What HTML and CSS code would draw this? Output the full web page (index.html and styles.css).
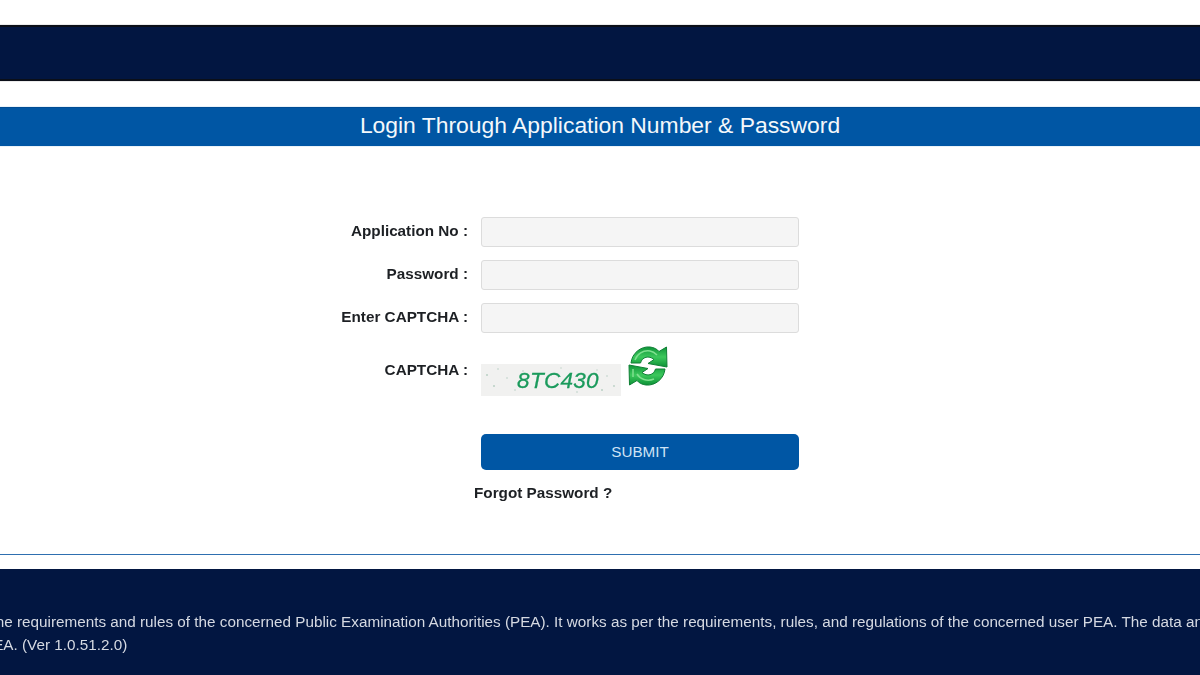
FILE: index.html
```html
<!DOCTYPE html>
<html lang="en">
<head>
<meta charset="utf-8">
<title>Login</title>
<link rel="stylesheet" href="styles.css">
</head>
<body>
<header class="topbar"></header>
<h1 class="title">Login Through Application Number &amp; Password</h1>
<main class="form">
  <div class="row">
    <label class="label">Application No :</label>
    <input class="field" type="text">
  </div>
  <div class="row">
    <label class="label">Password :</label>
    <input class="field" type="password">
  </div>
  <div class="row">
    <label class="label">Enter CAPTCHA :</label>
    <input class="field" type="text">
  </div>
  <div class="row captcha-row">
    <label class="label captcha-label">CAPTCHA :</label>
    <div class="captcha-wrap">
      <div class="captcha">
        <svg class="noise" width="140" height="32" viewBox="0 0 140 32" aria-hidden="true">
          <g fill="#b9cfc4">
            <circle cx="6" cy="11" r="1"/><circle cx="17" cy="5" r=".8"/><circle cx="13" cy="22" r="1"/><circle cx="26" cy="14" r=".8"/>
            <circle cx="34" cy="26" r=".8"/><circle cx="42" cy="7" r=".8"/><circle cx="80" cy="4" r=".7"/><circle cx="96" cy="28" r=".8"/>
            <circle cx="121" cy="26" r="1"/><circle cx="126" cy="12" r=".8"/><circle cx="133" cy="22" r=".9"/><circle cx="116" cy="6" r=".7"/>
          </g>
        </svg>
        <span class="captcha-text">8TC430</span>
      </div>
      <svg class="refresh" width="40" height="40" viewBox="0 0 40 40" aria-hidden="true">
        <defs>
          <linearGradient id="g1" x1="0" y1="0" x2="0" y2="1">
            <stop offset="0" stop-color="#0e9438"/>
            <stop offset=".5" stop-color="#3cc85c"/>
            <stop offset="1" stop-color="#0c9236"/>
          </linearGradient>
        </defs>
        <path d="M3 17 C4 7 13 0 22 1 C26 1.500 29 3 31 5.500 L38.500 1 L39 21 L20 17.500 L26 13.500 C21 9 14 11 12.500 17 Z" fill="url(#g1)" stroke="#0f7f35" stroke-width="1"/>
        <path d="M37 23 C36 33 27 40 18 39 C14 38.500 11 37 9 34.500 L1.500 39 L1 19 L20 22.500 L14 26.500 C19 31 26 29 27.500 23 Z" fill="url(#g1)" stroke="#0f7f35" stroke-width="1"/>
        <path d="M7 14 C9 8 15 4 22 5 C25 5.500 27 7 29 9" fill="none" stroke="#7fe08f" stroke-width="1.500"/>
        <path d="M5 23 L5 31 M9 28 C12 33 19 36 26 33" fill="none" stroke="#7fe08f" stroke-width="1.500"/>
      </svg>
    </div>
  </div>
  <div class="row submit-row">
    <span></span>
    <button class="submit" type="button">SUBMIT</button>
  </div>
  <a class="forgot">Forgot Password ?</a>
</main>
<hr class="rule">
<footer class="footer">
  <p class="footer-text">the requirements and rules of the concerned Public Examination Authorities (PEA). It works as per the requirements, rules, and regulations of the concerned user PEA. The data and<br>PEA. (Ver 1.0.51.2.0)</p>
</footer>
</body>
</html>
```
FILE: styles.css
```css
* { box-sizing: border-box; }
html, body { height: 675px; overflow: hidden; }
body {
  margin: 0;
  padding-top: 25px;
  background: #fff;
  font-family: "Liberation Sans", Arial, sans-serif;
  color: #212529;
  display: flex;
  flex-direction: column;
}
.topbar {
  height: 56px;
  flex: none;
  background: #021641;
  border-top: 2px solid #0b0f18;
  border-bottom: 2px solid #0b0f18;
  box-shadow: 0 0 1px #888;
}
.title {
  margin: 26px 0 0;
  height: 39px;
  flex: none;
  background: #0056a4;
  border-top: 1px solid #004c94;
  box-shadow: 0 0 1px #7fb0dc;
  color: #f4f8fb;
  font-size: 22.88px;
  font-weight: 400;
  line-height: 35px;
  text-align: center;
}
.form {
  flex: none;
  height: 408px;
  padding-top: 71px;
  display: flex;
  flex-direction: column;
}
.row {
  display: grid;
  grid-template-columns: 468px 318px;
  column-gap: 13px;
  margin-bottom: 13px;
  height: 30px;
}
.label {
  text-align: right;
  font-size: 15.28px;
  font-weight: 700;
  line-height: 27px;
  color: #1d2024;
  filter: blur(.3px);
}
.field {
  height: 30px;
  width: 318px;
  margin: 0;
  padding: 0 10px;
  background: #f5f5f5;
  border: 1px solid #dcdcdc;
  border-radius: 3px;
}
.captcha-row { height: 50px; margin-bottom: 38px; }
.captcha-label { padding-top: 10px; }
.captcha-wrap { display: flex; align-items: flex-start; gap: 7px; }
.captcha {
  position: relative;
  width: 140px;
  height: 32px;
  margin-top: 18px;
  background: #f1f1f0;
  display: flex;
  align-items: center;
  justify-content: center;
}
.noise { position: absolute; inset: 0; }
.captcha-text {
  position: relative;
  font-size: 22.5px;
  font-style: italic;
  letter-spacing: .3px;
  color: #1a9a5c;
  padding: 2px 0 0 14px;
  -webkit-text-stroke: .3px #1a9a5c;
  filter: blur(.4px);
}
.refresh { flex: none; filter: blur(.3px); }
.submit-row { height: 36px; margin-bottom: 14px; }
.submit {
  width: 318px;
  height: 36px;
  margin: 0;
  padding: 0 0 2px;
  background: #0056a4;
  border: 0;
  border-radius: 5px;
  color: #cfe3f5;
  font-family: inherit;
  font-size: 15.2px;
}
.forgot {
  margin-left: 474px;
  font-size: 15.28px;
  font-weight: 700;
  line-height: 18px;
  color: #1d2024;
  filter: blur(.3px);
}
.rule {
  flex: none;
  margin: 0;
  height: 1px;
  border: 0;
  background: #2e6fb0;
}
.footer {
  margin-top: 14px;
  flex: 1;
  background: #021641;
  overflow: hidden;
}
.footer-text {
  margin: 41px 0 0 -17px;
  width: 1600px;
  white-space: nowrap;
  text-indent: 8.5px;
  font-size: 15.28px;
  line-height: 23px;
  color: #d5d9e2;
  filter: blur(.3px);
}
```
